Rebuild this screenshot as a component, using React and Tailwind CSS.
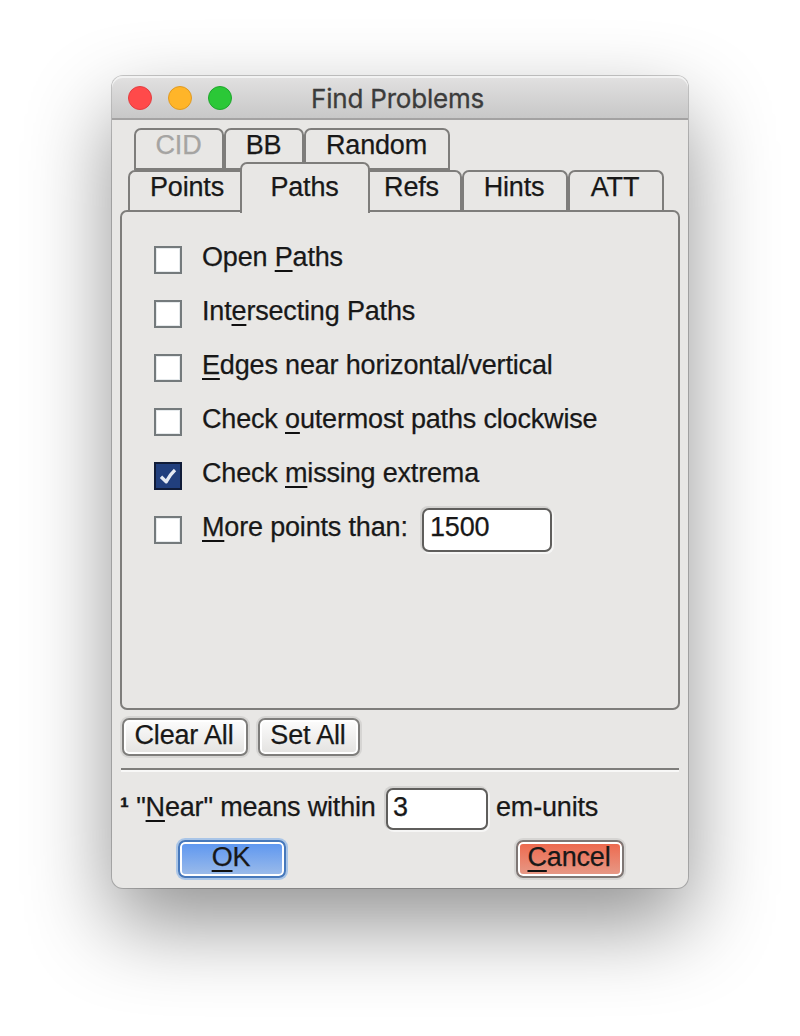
import React from 'react';

function Key({ children }) {
  return (
    <span className="underline decoration-[#101010] decoration-[2px] underline-offset-[4px] [text-decoration-skip-ink:none]">
      {children}
    </span>
  );
}

function Tab({ className, children }) {
  return (
    <div className={`border-[#7e7d7b] text-center leading-[30px] whitespace-nowrap ${className}`}>
      {children}
    </div>
  );
}

function CheckRow({ checked, children }) {
  return (
    <div className="flex h-[54px] items-start">
      <div
        className={`mt-1 mr-5 flex size-7 shrink-0 items-center justify-center border-2 ${
          checked
            ? 'border-[#101c38] bg-[#213f7d]'
            : 'border-[#747a7c] bg-white shadow-[inset_0_0_0_1px_#e6eaec]'
        }`}
      >
        {checked && (
          <svg className="size-6" viewBox="0 0 24 24" fill="none" stroke="#e4e9f2" strokeWidth="3.4" strokeLinejoin="round">
            <path d="M5 12.8 L10.2 17.8 Q13.5 11 19 6" />
          </svg>
        )}
      </div>
      <div className="flex whitespace-pre leading-[30px]">{children}</div>
    </div>
  );
}

function Entry({ className, children }) {
  return (
    <div
      className={`rounded-[7px] border-2 border-[#5f5e5c] bg-white leading-[30px] shadow-[-1px_-1px_0_1px_#d3d2d0,1px_1px_0_1px_#f6f6f5] ${className}`}
    >
      {children}
    </div>
  );
}

function Button({ className, children }) {
  return (
    <div
      className={`h-[38px] rounded-[7px] border-2 pr-[2px] text-center leading-[30px] whitespace-nowrap ${className}`}
    >
      {children}
    </div>
  );
}

export default function App() {
  return (
    <div className="h-[1036px] w-[800px] overflow-hidden bg-white px-28 pt-[76px] font-['Liberation_Sans',Arial,sans-serif] text-[27px] tracking-[-0.17px] text-[#181818] [-webkit-text-stroke:0.25px_currentColor]">
      <div className="h-[812px] w-[576px] rounded-[11px] bg-[#e8e7e5] shadow-[0_0_0_1px_rgba(0,0,0,0.2),0_36px_84px_rgba(0,0,0,0.43)]">
        <div className="flex h-11 items-center rounded-t-[11px] border-b-2 border-[#a3a2a2] bg-linear-to-b from-[#e2e1e1] to-[#c8c8c8] pt-[2px] pl-4 shadow-[inset_0_2px_0_#f2f2f2]">
          <div className="flex gap-4">
            <div className="size-6 rounded-full border border-[#e33e41] bg-[#ff4a4a]" />
            <div className="size-6 rounded-full border border-[#e09a22] bg-[#ffb529]" />
            <div className="size-6 rounded-full border border-[#1fa62d] bg-[#2bc837]" />
          </div>
          <div className="ml-[79px] pt-px font-['Inter',sans-serif] text-[26px] leading-[30px] tracking-[-0.2px] text-[#3c3c3c] whitespace-nowrap [-webkit-text-stroke:0.3px_currentColor]">
            Find Problems
          </div>
        </div>

        <div className="px-2 pt-2">
          <div className="ml-[14px] flex h-[42px]">
            <Tab className="w-[90px] rounded-t-[7px] border-2 pr-px text-[#a5a4a2]">CID</Tab>
            <Tab className="w-20 rounded-t-[7px] border-2 pr-px">BB</Tab>
            <Tab className="w-[146px] rounded-t-[7px] border-2 pr-px">Random</Tab>
          </div>
          <div className="ml-2 flex h-10">
            <Tab className="w-28 rounded-tl-[7px] border-t-2 border-l-2 pl-[4px]">Points</Tab>
            <Tab className="z-10 -mt-2 h-[51px] w-[130px] rounded-t-[7px] border-x-2 border-t-2 bg-[#e8e7e5] pt-2 pr-px">
              Paths
            </Tab>
            <Tab className="w-[92px] rounded-tr-[7px] border-t-2 border-r-2 pr-[7px]">Refs</Tab>
            <Tab className="w-[106px] rounded-t-[7px] border-x-2 border-t-2 pr-[2px]">Hints</Tab>
            <Tab className="w-24 rounded-t-[7px] border-x-2 border-t-2 pr-[2px]">ATT</Tab>
          </div>
          <div className="h-[500px] rounded-[7px] border-2 border-[#7e7d7b] pt-[30px] pl-8">
            <CheckRow>Open <Key>P</Key>aths</CheckRow>
            <CheckRow>Int<Key>e</Key>rsecting Paths</CheckRow>
            <CheckRow><Key>E</Key>dges near horizontal/vertical</CheckRow>
            <CheckRow>Check <Key>o</Key>utermost paths clockwise</CheckRow>
            <CheckRow checked>Check <Key>m</Key>issing extrema</CheckRow>
            <CheckRow>
              <div className="w-[220px]"><Key>M</Key>ore points than:</div>
              <Entry className="-mt-1 h-11 w-[130px] pt-[2px] pl-[6px]">1500</Entry>
            </CheckRow>
          </div>

          <div className="mt-2 ml-[2px] flex gap-[10px]">
            <Button className="w-[126px] border-[#7e7d7b] bg-linear-to-b from-[#fdfdfd] to-[#e3e2e0] shadow-[0_0_0_2px_#d6d5d3,inset_0_0_0_2px_#fff]">
              Clear All
            </Button>
            <Button className="w-[102px] border-[#7e7d7b] bg-linear-to-b from-[#fdfdfd] to-[#e3e2e0] shadow-[0_0_0_2px_#d6d5d3,inset_0_0_0_2px_#fff]">
              Set All
            </Button>
          </div>
          <div className="mx-px mt-3 h-1 border-t-2 border-[#7e7d7b] bg-[#f8f8f7]" />
          <div className="mt-4 flex h-[42px] leading-[30px] whitespace-pre">
            <div className="w-[266px] pt-1"><span className="font-bold">¹</span> "<Key>N</Key>ear" means within</div>
            <Entry className="h-[42px] w-[102px] pt-[2px] pl-[5px]">3</Entry>
            <div className="ml-2 pt-1">em-units</div>
          </div>
          <div className="mt-[10px] flex justify-between px-[58px] pr-14">
            <Button className="w-[108px] border-[#4678bb] bg-linear-to-b from-[#5b95f0] to-[#9dbce9] shadow-[0_0_0_2px_#a9c5e7,inset_0_0_0_2px_#fff]">
              <Key>O</Key>K
            </Button>
            <Button className="w-[108px] border-[#7e7775] bg-linear-to-b from-[#ed664b] to-[#e69a88] shadow-[0_0_0_2px_#d6d5d3,inset_0_0_0_2px_#fff]">
              <Key>C</Key>ancel
            </Button>
          </div>
        </div>
      </div>
    </div>
  );
}
